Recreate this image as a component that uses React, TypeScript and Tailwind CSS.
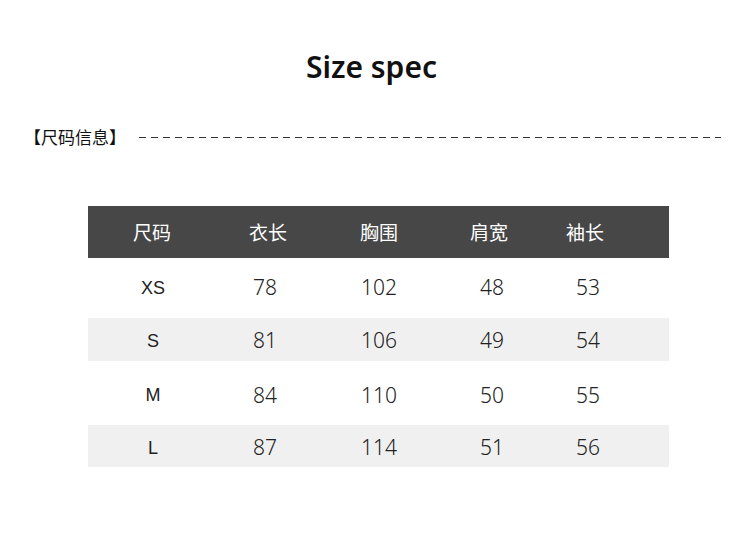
const headers = ["尺码", "衣长", "胸围", "肩宽", "袖长"]

const rows = [
  { size: "XS", vals: ["78", "102", "48", "53"], gray: false, h: "h-[60px]", pad: "pt-0" },
  { size: "S", vals: ["81", "106", "49", "54"], gray: true, h: "h-[43px]", pad: "pt-[3px]" },
  { size: "M", vals: ["84", "110", "50", "55"], gray: false, h: "h-[64px]", pad: "pt-[5px]" },
  { size: "L", vals: ["87", "114", "51", "56"], gray: true, h: "h-[42px]", pad: "pt-[4px]" },
]

// header columns and value columns sit a few px apart in the picture
const headW = ["w-[128px]", "w-[104px]", "w-[118px]", "w-[102px]", "w-[90px]"]
const valW = ["w-[130px]", "w-[94px]", "w-[134px]", "w-[92px]", "w-[100px]"]

export default function App() {
  return (
    <div className="w-[750px] h-[555px] bg-white overflow-hidden text-[#222]">
      <h1 className="pt-[47px] pr-[7px] text-center leading-[40px] text-[30px] font-semibold font-['Noto_Sans','Noto_Sans_CJK_SC',sans-serif] text-[#111]">
        Size spec
      </h1>

      <div className="mt-[38px] h-[24px] flex items-center pl-[24px]">
        <span className="text-[17px] leading-[24px] font-normal font-['Noto_Sans_CJK_SC',sans-serif] text-[#111]">【尺码信息】</span>
        <svg className="ml-[13px] mt-[2px]" width="582" height="2">
          <line x1="0" y1="0.5" x2="582" y2="0.5" stroke="#333" strokeWidth="1" strokeDasharray="7 5" />
        </svg>
      </div>

      <div className="mt-[57px] ml-[88px] w-[581px]">
        <div className="h-[52px] bg-[#474747] flex items-center">
          {headers.map((h, i) => (
            <div key={h} className={`${headW[i]} text-center text-white text-[19px] font-['Noto_Sans_CJK_SC',sans-serif]`}>
              {h}
            </div>
          ))}
        </div>
        {rows.map((r) => (
          <div key={r.size} className={`${r.h} ${r.pad} flex items-center ${r.gray ? "bg-[#f0f0f0]" : "bg-white"}`}>
            <div className={`${valW[0]} text-center text-[18px] font-['Liberation_Sans',sans-serif] text-[#222]`}>{r.size}</div>
            {r.vals.map((v, i) => (
              <div key={i} className={`${valW[i + 1]} text-center text-[21px] font-light font-['Noto_Sans',sans-serif] text-[#222]`}>
                {v}
              </div>
            ))}
          </div>
        ))}
      </div>
    </div>
  )
}
